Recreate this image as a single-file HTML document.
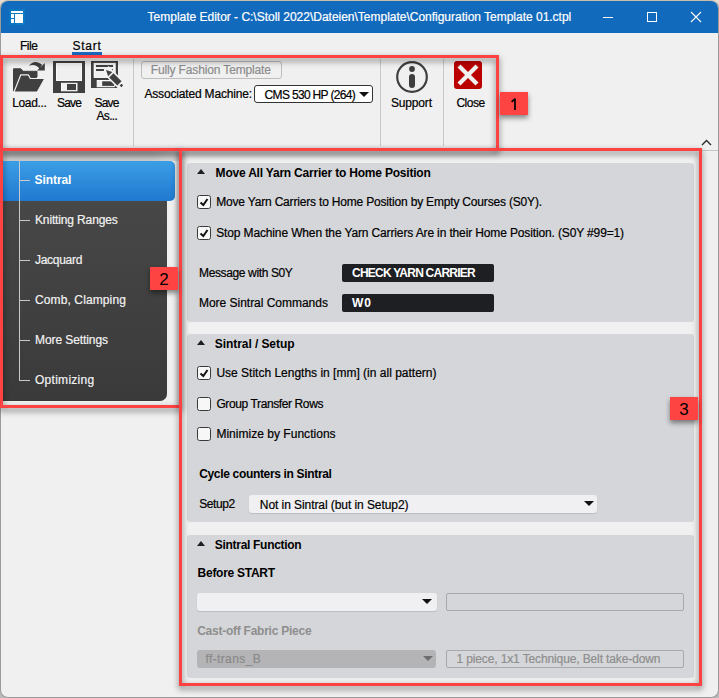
<!DOCTYPE html>
<html><head><meta charset="utf-8">
<style>
*{margin:0;padding:0;box-sizing:border-box}
html,body{width:719px;height:698px;overflow:hidden;background:linear-gradient(#e6dccf,#b9b9b9)}
body{position:relative;font-family:"Liberation Sans",sans-serif;font-size:11.7px;color:#1b1b1b}
.a{position:absolute}
.t{position:absolute;white-space:pre;line-height:14px;height:14px;font-size:12px;-webkit-text-stroke:0.2px currentColor}
.b{font-weight:bold}
#win{position:absolute;left:0;top:0;width:719px;height:698px;background:#f0f0f0;border:1px solid #9a9a9a;border-top-color:#cbbba9;border-radius:8px}
#title{position:absolute;left:1px;top:1px;width:717px;height:32px;background:#126abc;border-radius:7px 7px 0 0}
.red{position:absolute;border:3px solid #fe4242;filter:drop-shadow(0 3px 3px rgba(0,0,0,.55))}
.lbl{position:absolute;background:#fe4343;box-shadow:0 3px 5px rgba(0,0,0,.45);color:#000;font-size:17px;text-align:center}
.sep{position:absolute;width:1px;background:#c6c8cc}
.panel{position:absolute;left:187px;width:507px;background:#d5d6d9;border-radius:3px}
.cb{position:absolute;left:197px;width:14px;height:14px;border:1.3px solid #3a3a3a;border-radius:2.5px;background:#f7f7f7}
.tri{position:absolute;left:197px;width:0;height:0;border-left:4.5px solid transparent;border-right:4.5px solid transparent;border-bottom:5px solid #1e1e1e}
.dark{position:absolute;left:342px;width:152px;height:18px;background:#1e1f23;border-radius:2px}
.combo{position:absolute;height:18px;background:#f0f0f2;border-radius:3px;box-shadow:0 1px 1px rgba(0,0,0,.12)}
.arr{position:absolute;width:0;height:0;border-left:5px solid transparent;border-right:5px solid transparent;border-top:5.5px solid #111}
.tb{position:absolute;left:446px;width:238px;height:18px;border:1px solid #a9a9ab;border-radius:2px}
.item{color:#f4f4f4}
.tick{position:absolute;left:19px;width:11px;height:1px;background:#c9c9c9}
</style></head><body>
<div id="win"></div>
<div id="title"></div>
<!-- title icon -->
<div class="a" style="left:9px;top:9px;width:16px;height:16px;background:#0b79c1"></div>
<div class="a" style="left:11px;top:11px;width:12px;height:2px;background:#fff"></div>
<div class="a" style="left:11px;top:14px;width:3px;height:4px;background:#fff"></div>
<div class="a" style="left:11px;top:19px;width:3px;height:4px;background:#fff"></div>
<div class="a" style="left:15px;top:14px;width:8px;height:9px;background:#fff"></div>
<div class="a" style="left:603px;top:17px;width:10px;height:1px;background:#fff"></div>
<div class="a" style="left:647px;top:12px;width:10px;height:10px;border:1px solid #fff"></div>
<svg class="a" style="left:690px;top:11px" width="12" height="12" viewBox="0 0 12 12"><path d="M1 1L11 11M11 1L1 11" stroke="#fff" stroke-width="1.1"/></svg>

<!-- menu -->
<div class="a" style="left:72px;top:52px;width:30px;height:3px;background:#1a6bbf"></div>

<!-- ribbon bottom line -->
<div class="a" style="left:1px;top:150px;width:717px;height:1px;background:#c4c4c4"></div>

<!-- ribbon content -->
<svg class="a" style="left:13px;top:61px" width="33" height="33" viewBox="0 0 33 33">
  <path d="M0.5 7.8 L7.8 7.8 L10 10.3 L24 10.3 L24 16 L0.5 30 Z" fill="#404040" stroke="#404040" stroke-width="1" stroke-linejoin="round"/>
  <path d="M7.8 13.8 L15.4 13.8 L17.3 17.5 L31.8 17.5 L24.3 31 L1 31 Z" fill="#404040" stroke="#f0f0f0" stroke-width="1.2" stroke-linejoin="round"/>
  <path d="M15.8 4.8 Q21.5 -2.2 29 3.5 L26.8 8.2 Q22.5 2.2 15.8 4.8 Z" fill="#404040"/>
  <path d="M31.8 2 L31.8 9.5 L24 9.5 Z" fill="#404040"/>
</svg>
<svg class="a" style="left:53px;top:61px" width="32" height="32" viewBox="0 0 32 32">
  <path d="M0 0H32V32H0Z M3 2V20H29V2Z" fill="#404040" fill-rule="evenodd"/>
  <rect x="3.5" y="2.5" width="25" height="17" fill="none" stroke="#fafafa" stroke-width="1"/>
  <rect x="8.5" y="22.3" width="15.5" height="7.5" fill="#f0f0f0" stroke="#fafafa" stroke-width="1"/>
  <rect x="14" y="23" width="9" height="6" fill="#404040"/>
</svg>
<svg class="a" style="left:91px;top:61px" width="34" height="30" viewBox="0 0 34 30">
  <path d="M0 0H27V27H0Z M2.8 1.9V16.8H24.5V1.9Z" fill="#404040" fill-rule="evenodd"/>
  <rect x="3.3" y="2.4" width="20.7" height="13.9" fill="none" stroke="#fafafa" stroke-width="1"/>
  <rect x="5" y="4" width="17" height="2" fill="#404040"/>
  <rect x="5" y="8" width="8" height="2" fill="#404040"/>
  <rect x="19" y="8" width="3" height="2" fill="#404040"/>
  <rect x="6.2" y="19.5" width="17" height="6.2" fill="#f0f0f0" stroke="#fafafa" stroke-width="1"/>
  <rect x="11.2" y="20.3" width="11.8" height="4.6" fill="#404040"/>
  <g transform="translate(15 9) rotate(45)">
    <path d="M-1 -4.6 L22 -4.6 L24.5 -2 L24.5 2 L22 4.6 L-1 4.6 Z" fill="#f2f2f2"/>
    <path d="M0 0 L6 -3 L6 3 Z" fill="#404040"/>
    <rect x="7.5" y="-3" width="11.5" height="6" fill="#404040"/>
    <rect x="20.6" y="-1.3" width="2.4" height="2.6" fill="#404040"/>
  </g>
</svg>
<div class="sep" style="left:133px;top:59px;height:87px"></div>
<div class="a" style="left:141px;top:61px;width:141px;height:18px;border:1px solid #bdbdbd;border-radius:3px"></div>
<div class="a" style="left:254px;top:85px;width:119px;height:18px;border:1px solid #333;border-radius:3px;background:#fff"></div>
<div class="arr" style="left:359px;top:92px"></div>
<div class="sep" style="left:380px;top:59px;height:87px"></div>
<svg class="a" style="left:396px;top:61px" width="32" height="32" viewBox="0 0 32 32">
  <circle cx="16" cy="16" r="14.8" fill="none" stroke="#3f3f3f" stroke-width="2.2"/>
  <circle cx="16" cy="8" r="2.9" fill="#3f3f3f"/>
  <rect x="13" y="13" width="6" height="14" rx="3" fill="#3f3f3f"/>
</svg>
<div class="sep" style="left:443px;top:59px;height:87px"></div>
<div class="a" style="left:454px;top:61px;width:28px;height:28px;background:#bb0000;border-radius:3px"></div>
<svg class="a" style="left:454px;top:61px" width="28" height="28" viewBox="0 0 28 28"><path d="M5 5L23 23M23 5L5 23" stroke="#f0f0f0" stroke-width="4.2"/></svg>
<svg class="a" style="left:701px;top:139px" width="11" height="7" viewBox="0 0 11 7"><path d="M1 6L5.5 1.5L10 6" fill="none" stroke="#2a2a2a" stroke-width="1.4"/></svg>

<!-- left nav -->
<div class="a" style="left:3px;top:151px;width:176px;height:10px;background:linear-gradient(90deg,#cbcbcb 0,#cbcbcb 150px,#dcdcdc 176px)"></div>
<div class="a" style="left:3px;top:161px;width:164px;height:240px;border-radius:0 0 7px 0;background:linear-gradient(#4a4a4a,#3a3a3a)"></div>
<div class="a" style="left:3px;top:161px;width:172px;height:40px;border-radius:0 5px 5px 0;background:linear-gradient(#3c9ee6,#2079d0)"></div>
<div class="a" style="left:19px;top:157px;width:1px;height:224px;background:#c9c9c9"></div>
<div class="tick" style="top:180px"></div>
<div class="tick" style="top:220px"></div>
<div class="tick" style="top:260px"></div>
<div class="tick" style="top:300px"></div>
<div class="tick" style="top:340px"></div>
<div class="tick" style="top:380px"></div>

<!-- panels -->
<div class="panel" style="top:163px;height:159px"></div>
<div class="panel" style="top:334px;height:188px"></div>
<div class="panel" style="top:535px;height:143px"></div>

<!-- panel 1 -->
<div class="tri" style="top:169px"></div>
<div class="cb" style="top:195px"></div>
<svg class="a" style="left:197px;top:195px" width="14" height="14" viewBox="0 0 14 14"><path d="M3.5 7.5L6.3 10L10.5 4" fill="none" stroke="#111" stroke-width="2"/></svg>
<div class="cb" style="top:226px"></div>
<svg class="a" style="left:197px;top:226px" width="14" height="14" viewBox="0 0 14 14"><path d="M3.5 7.5L6.3 10L10.5 4" fill="none" stroke="#111" stroke-width="2"/></svg>
<div class="dark" style="top:264px"></div>
<div class="dark" style="top:294px"></div>

<!-- panel 2 -->
<div class="tri" style="top:340px"></div>
<div class="cb" style="top:366px"></div>
<svg class="a" style="left:197px;top:366px" width="14" height="14" viewBox="0 0 14 14"><path d="M3.5 7.5L6.3 10L10.5 4" fill="none" stroke="#111" stroke-width="2"/></svg>
<div class="cb" style="top:397px"></div>
<div class="cb" style="top:427px"></div>
<div class="combo" style="left:249px;top:495px;width:348px"></div>
<div class="arr" style="left:584px;top:501px"></div>

<!-- panel 3 -->
<div class="tri" style="top:541px"></div>
<div class="combo" style="left:197px;top:593px;width:240px"></div>
<div class="arr" style="left:422px;top:599px"></div>
<div class="tb" style="top:593px"></div>
<div class="combo" style="left:197px;top:650px;width:239px;background:#b4b4b6;box-shadow:none"></div>
<div class="arr" style="left:423px;top:656px;border-top-color:#6e6e6e"></div>
<div class="tb" style="top:650px"></div>

<div id="ttl" class="t" style="left:147.60px;top:10px;color:#fff;font-weight:normal;letter-spacing:-0.013px">Template Editor - C:\Stoll 2022\Dateien\Template\Configuration Template 01.ctpl</div>
<div id="file" class="t" style="left:20.00px;top:39px;color:#000;font-weight:normal;letter-spacing:-0.500px">File</div>
<div id="start" class="t" style="left:72.40px;top:39px;color:#000;font-weight:normal;letter-spacing:0.750px">Start</div>
<div id="load" class="t" style="left:12.20px;top:96px;color:#000;font-weight:normal;letter-spacing:-0.333px">Load...</div>
<div id="save" class="t" style="left:57.00px;top:96px;color:#000;font-weight:normal;letter-spacing:-0.833px">Save</div>
<div id="save2" class="t" style="left:94.60px;top:96px;color:#000;font-weight:normal;letter-spacing:-0.833px">Save</div>
<div id="as" class="t" style="left:96.40px;top:109px;color:#000;font-weight:normal;letter-spacing:-0.625px">As...</div>
<div id="fully" class="t" style="left:150.80px;top:63px;color:#8c8c8c;font-weight:normal;letter-spacing:-0.143px">Fully Fashion Template</div>
<div id="assoc" class="t" style="left:144.40px;top:87px;color:#000;font-weight:normal;letter-spacing:-0.167px">Associated Machine:</div>
<div id="cms" class="t" style="left:264.60px;top:88px;color:#000;font-weight:normal;letter-spacing:-0.667px">CMS 530 HP (264)</div>
<div id="support" class="t" style="left:391.00px;top:96px;color:#000;font-weight:normal;letter-spacing:-0.167px">Support</div>
<div id="close" class="t" style="left:456.40px;top:96px;color:#000;font-weight:normal;letter-spacing:-0.500px">Close</div>
<div id="n1" class="t" style="left:34.60px;top:173px;color:#ffffff;font-weight:bold;letter-spacing:-0.083px;-webkit-text-stroke:0">Sintral</div>
<div id="n2" class="t" style="left:35.00px;top:213px;color:#f2f2f2;font-weight:normal;letter-spacing:-0.143px">Knitting Ranges</div>
<div id="n3" class="t" style="left:35.00px;top:253px;color:#f2f2f2;font-weight:normal;letter-spacing:-0.286px">Jacquard</div>
<div id="n4" class="t" style="left:35.00px;top:293px;color:#f2f2f2;font-weight:normal;letter-spacing:0.115px">Comb, Clamping</div>
<div id="n5" class="t" style="left:35.00px;top:333px;color:#f2f2f2;font-weight:normal;letter-spacing:-0.083px">More Settings</div>
<div id="n6" class="t" style="left:35.00px;top:373px;color:#f2f2f2;font-weight:normal;letter-spacing:0.278px">Optimizing</div>
<div id="h1" class="t" style="left:215.60px;top:166px;color:#000;font-weight:bold;letter-spacing:-0.203px;-webkit-text-stroke:0">Move All Yarn Carrier to Home Position</div>
<div id="c1" class="t" style="left:216.20px;top:195px;color:#000;font-weight:normal;letter-spacing:-0.181px">Move Yarn Carriers to Home Position by Empty Courses (S0Y).</div>
<div id="c2" class="t" style="left:216.20px;top:226px;color:#000;font-weight:normal;letter-spacing:-0.135px">Stop Machine When the Yarn Carriers Are in their Home Position. (S0Y #99=1)</div>
<div id="msg" class="t" style="left:199.00px;top:266px;color:#000;font-weight:normal;letter-spacing:-0.367px">Message with S0Y</div>
<div id="check" class="t" style="left:352.00px;top:266px;color:#ffffff;font-weight:bold;letter-spacing:-0.765px;-webkit-text-stroke:0">CHECK YARN CARRIER</div>
<div id="more" class="t" style="left:199.00px;top:296px;color:#000;font-weight:normal;letter-spacing:-0.025px">More Sintral Commands</div>
<div id="w0" class="t" style="left:352.00px;top:296px;color:#ffffff;font-weight:bold;letter-spacing:1.000px;-webkit-text-stroke:0">W0</div>
<div id="h2" class="t" style="left:214.80px;top:337px;color:#000;font-weight:bold;letter-spacing:-0.071px;-webkit-text-stroke:0">Sintral / Setup</div>
<div id="c3" class="t" style="left:216.40px;top:366px;color:#000;font-weight:normal;letter-spacing:-0.000px">Use Stitch Lengths in [mm] (in all pattern)</div>
<div id="c4" class="t" style="left:216.40px;top:397px;color:#000;font-weight:normal;letter-spacing:-0.389px">Group Transfer Rows</div>
<div id="c5" class="t" style="left:216.40px;top:427px;color:#000;font-weight:normal;letter-spacing:0.025px">Minimize by Functions</div>
<div id="cyc" class="t" style="left:199.20px;top:467px;color:#000;font-weight:bold;letter-spacing:-0.333px;-webkit-text-stroke:0">Cycle counters in Sintral</div>
<div id="setup2" class="t" style="left:199.20px;top:497px;color:#000;font-weight:normal;letter-spacing:-0.400px">Setup2</div>
<div id="notin" class="t" style="left:259.80px;top:498px;color:#000;font-weight:normal;letter-spacing:-0.069px">Not in Sintral (but in Setup2)</div>
<div id="h3" class="t" style="left:214.80px;top:538px;color:#000;font-weight:bold;letter-spacing:-0.300px;-webkit-text-stroke:0">Sintral Function</div>
<div id="before" class="t" style="left:197.60px;top:566px;color:#000;font-weight:bold;letter-spacing:-0.273px;-webkit-text-stroke:0">Before START</div>
<div id="cast" class="t" style="left:197.20px;top:624px;color:#8e8e8e;font-weight:bold;letter-spacing:-0.250px;-webkit-text-stroke:0">Cast-off Fabric Piece</div>
<div id="ff" class="t" style="left:205.40px;top:652px;color:#8a8a8a;font-weight:normal;letter-spacing:0.389px">ff-trans_B</div>
<div id="piece" class="t" style="left:456.40px;top:652px;color:#8e8e8e;font-weight:normal;letter-spacing:-0.122px">1 piece, 1x1 Technique, Belt take-down</div>
<!-- red annotation boxes -->
<div class="red" style="left:0px;top:55px;width:499px;height:96px"></div>
<div class="red" style="left:0px;top:148px;width:182px;height:260px"></div>
<div class="red" style="left:179px;top:148px;width:523px;height:538px"></div>
<div class="lbl" style="left:500px;top:92px;width:28px;height:23px"><svg width="28" height="23" viewBox="0 0 28 23" style="position:absolute;left:0;top:0"><path d="M11.6 9.8 L15 6.8 V18" fill="none" stroke="#000" stroke-width="1.7" stroke-linejoin="bevel"/></svg></div>
<div class="lbl" style="left:150px;top:267px;width:28px;height:23px;line-height:25px">2</div>
<div class="lbl" style="left:670px;top:397px;width:28px;height:23px;line-height:25px">3</div>
</body></html>
